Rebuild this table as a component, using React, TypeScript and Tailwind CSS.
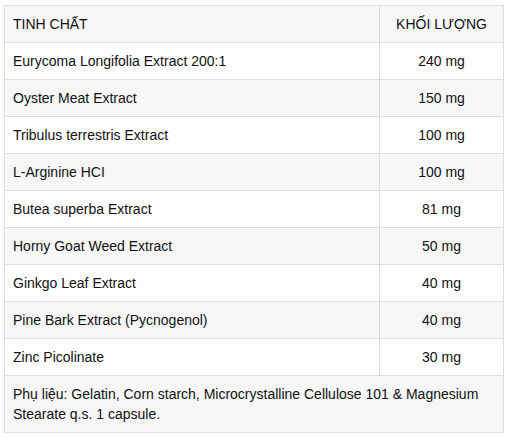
import React from "react";

const rows: [string, string][] = [
  ["Eurycoma Longifolia Extract 200:1", "240 mg"],
  ["Oyster Meat Extract", "150 mg"],
  ["Tribulus terrestris Extract", "100 mg"],
  ["L-Arginine HCI", "100 mg"],
  ["Butea superba Extract", "81 mg"],
  ["Horny Goat Weed Extract", "50 mg"],
  ["Ginkgo Leaf Extract", "40 mg"],
  ["Pine Bark Extract (Pycnogenol)", "40 mg"],
  ["Zinc Picolinate", "30 mg"],
];

export default function App() {
  return (
    <div className="bg-white w-[507px] h-[438px] pt-[5px] pl-[4px] font-['Liberation_Sans',Arial,sans-serif] text-[14px] leading-[20px] text-[#111111]">
      <table className="border-collapse w-[500px] table-fixed">
        <colgroup>
          <col className="w-[375px]" />
          <col />
        </colgroup>
        <thead>
          <tr className="bg-[#f7f7f7]">
            <th className="border border-[#dddddd] px-[8px] py-[8px] text-left font-normal">TINH CHẤT</th>
            <th className="border border-[#dddddd] px-[8px] py-[8px] text-center font-normal">KHỐI LƯỢNG</th>
          </tr>
        </thead>
        <tbody>
          {rows.map(([name, amt], i) => (
            <tr key={name} className={i % 2 === 1 ? "bg-[#f7f7f7]" : "bg-white"}>
              <td className="border border-[#dddddd] px-[8px] py-[8px]">{name}</td>
              <td className="border border-[#dddddd] px-[8px] py-[8px] text-center">{amt}</td>
            </tr>
          ))}
          <tr className="bg-[#f7f7f7]">
            <td colSpan={2} className="border border-[#dddddd] px-[8px] py-[8px]">
              Phụ liệu: Gelatin, Corn starch, Microcrystalline Cellulose 101 &amp; Magnesium Stearate q.s. 1 capsule.
            </td>
          </tr>
        </tbody>
      </table>
    </div>
  );
}
